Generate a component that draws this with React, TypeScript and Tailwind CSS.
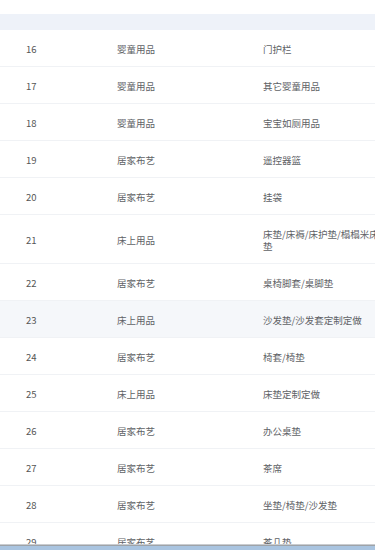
import React from "react";

const rows: { n: number; a: string; b: string; hover?: boolean }[] = [
  { n: 16, a: "婴童用品", b: "门护栏" },
  { n: 17, a: "婴童用品", b: "其它婴童用品" },
  { n: 18, a: "婴童用品", b: "宝宝如厕用品" },
  { n: 19, a: "居家布艺", b: "遥控器篮" },
  { n: 20, a: "居家布艺", b: "挂袋" },
  { n: 21, a: "床上用品", b: "床垫/床褥/床护垫/榻榻米床垫" },
  { n: 22, a: "居家布艺", b: "桌椅脚套/桌脚垫" },
  { n: 23, a: "床上用品", b: "沙发垫/沙发套定制定做", hover: true },
  { n: 24, a: "居家布艺", b: "椅套/椅垫" },
  { n: 25, a: "床上用品", b: "床垫定制定做" },
  { n: 26, a: "居家布艺", b: "办公桌垫" },
  { n: 27, a: "居家布艺", b: "茶席" },
  { n: 28, a: "居家布艺", b: "坐垫/椅垫/沙发垫" },
  { n: 29, a: "居家布艺", b: "茶几垫" },
  { n: 30, a: "居家布艺", b: "门帘" },
];

export default function App() {
  return (
    <div
      className="relative w-[375px] h-[550px] overflow-hidden bg-white text-[9.5px] text-[#606266]"
      style={{ fontFamily: '"Noto Sans CJK SC", "Noto Sans", sans-serif' }}
    >
      <div className="h-[14px]" />
      <div className="h-[16px] bg-[#eef2f9]" />
      <div className="flex flex-col">
        {rows.map((r) => (
          <div
            key={r.n}
            className={`flex items-center border-b border-[#f0f2f5] pt-[13px] pb-[11px] leading-[12px] ${
              r.hover ? "bg-[#f5f7fa]" : "bg-white"
            }`}
          >
            <div className="w-[117px] shrink-0 pl-[26px] text-[#555]">{r.n}</div>
            <div className="w-[146px] shrink-0">{r.a}</div>
            <div className="w-[120px] shrink-0 break-all">{r.b}</div>
          </div>
        ))}
      </div>
      <div className="absolute bottom-0 left-0 right-0 flex flex-col">
        <div className="h-[1px] bg-[#c9ccd0]" />
        <div className="h-[1px] bg-[#9ea3a8]" />
        <div className="h-[4px] bg-[#a9c4e0]" />
      </div>
    </div>
  );
}
